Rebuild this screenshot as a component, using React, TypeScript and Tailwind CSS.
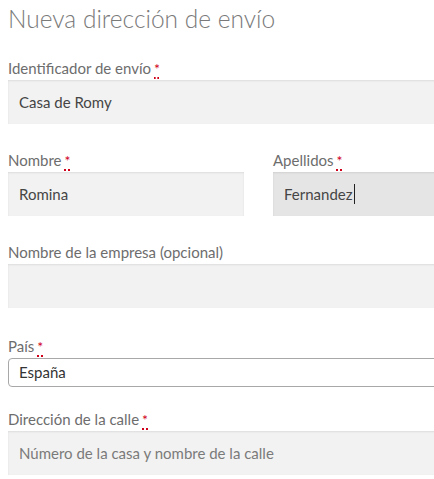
import React from "react";

function Req() {
  return (
    <abbr
      title="obligatorio"
      className="ml-[3px] text-[14px] text-[#d0021b] underline decoration-dotted decoration-[#d0021b] decoration-2 underline-offset-[3px]"
    >
      *
    </abbr>
  );
}

function Label({ children, req }: { children: React.ReactNode; req?: boolean }) {
  return (
    <div className="h-[24px] leading-[24px] text-[15px] text-[#6d6d6d] whitespace-nowrap">
      {children}
      {req && <Req />}
    </div>
  );
}

function Field({
  value,
  placeholder,
  focused,
}: {
  value?: string;
  placeholder?: string;
  focused?: boolean;
}) {
  return (
    <div
      className={`h-[44px] flex items-center pl-[11px] text-[15px] whitespace-nowrap shadow-[inset_0_1px_2px_rgba(0,0,0,0.09)] ${
        focused ? "bg-[#e6e5e6]" : "bg-[#f2f2f2]"
      }`}
    >
      {value ? (
        <span className="text-[#454545]">{value}</span>
      ) : placeholder ? (
        <span className="text-[#7a7a7a]">{placeholder}</span>
      ) : null}
      {focused && <span className="w-px h-[20px] bg-[#222] ml-[1px]" />}
    </div>
  );
}

export default function App() {
  return (
    <div
      className="w-[434px] h-[479px] overflow-hidden bg-white"
      style={{ fontFamily: "Lato, 'Open Sans', sans-serif" }}
    >
      <div className="w-[501px] ml-[8px]">
        <h2 className="h-[56px] pt-[4px] text-[24.5px] leading-[30px] font-light text-[#7a7a7a] whitespace-nowrap">
          Nueva dirección de envío
        </h2>

        <div className="mb-[24px]">
          <Label req>Identificador de envío</Label>
          <Field value="Casa de Romy" />
        </div>

        <div className="grid grid-cols-[236px_236px] gap-x-[29px] mb-[24px]">
          <div>
            <Label req>Nombre</Label>
            <Field value="Romina" />
          </div>
          <div>
            <Label req>Apellidos</Label>
            <Field value="Fernandez" focused />
          </div>
        </div>

        <div className="mb-[26px]">
          <Label>Nombre de la empresa (opcional)</Label>
          <Field />
        </div>

        <div className="mb-[20px]">
          <Label req>País</Label>
          <div className="h-[29px] flex items-center pl-[10px] border border-[#a8a8a8] rounded-[4px] text-[15px] text-[#333]">
            España
          </div>
        </div>

        <div>
          <Label req>Dirección de la calle</Label>
          <Field placeholder="Número de la casa y nombre de la calle" />
        </div>
      </div>
    </div>
  );
}
